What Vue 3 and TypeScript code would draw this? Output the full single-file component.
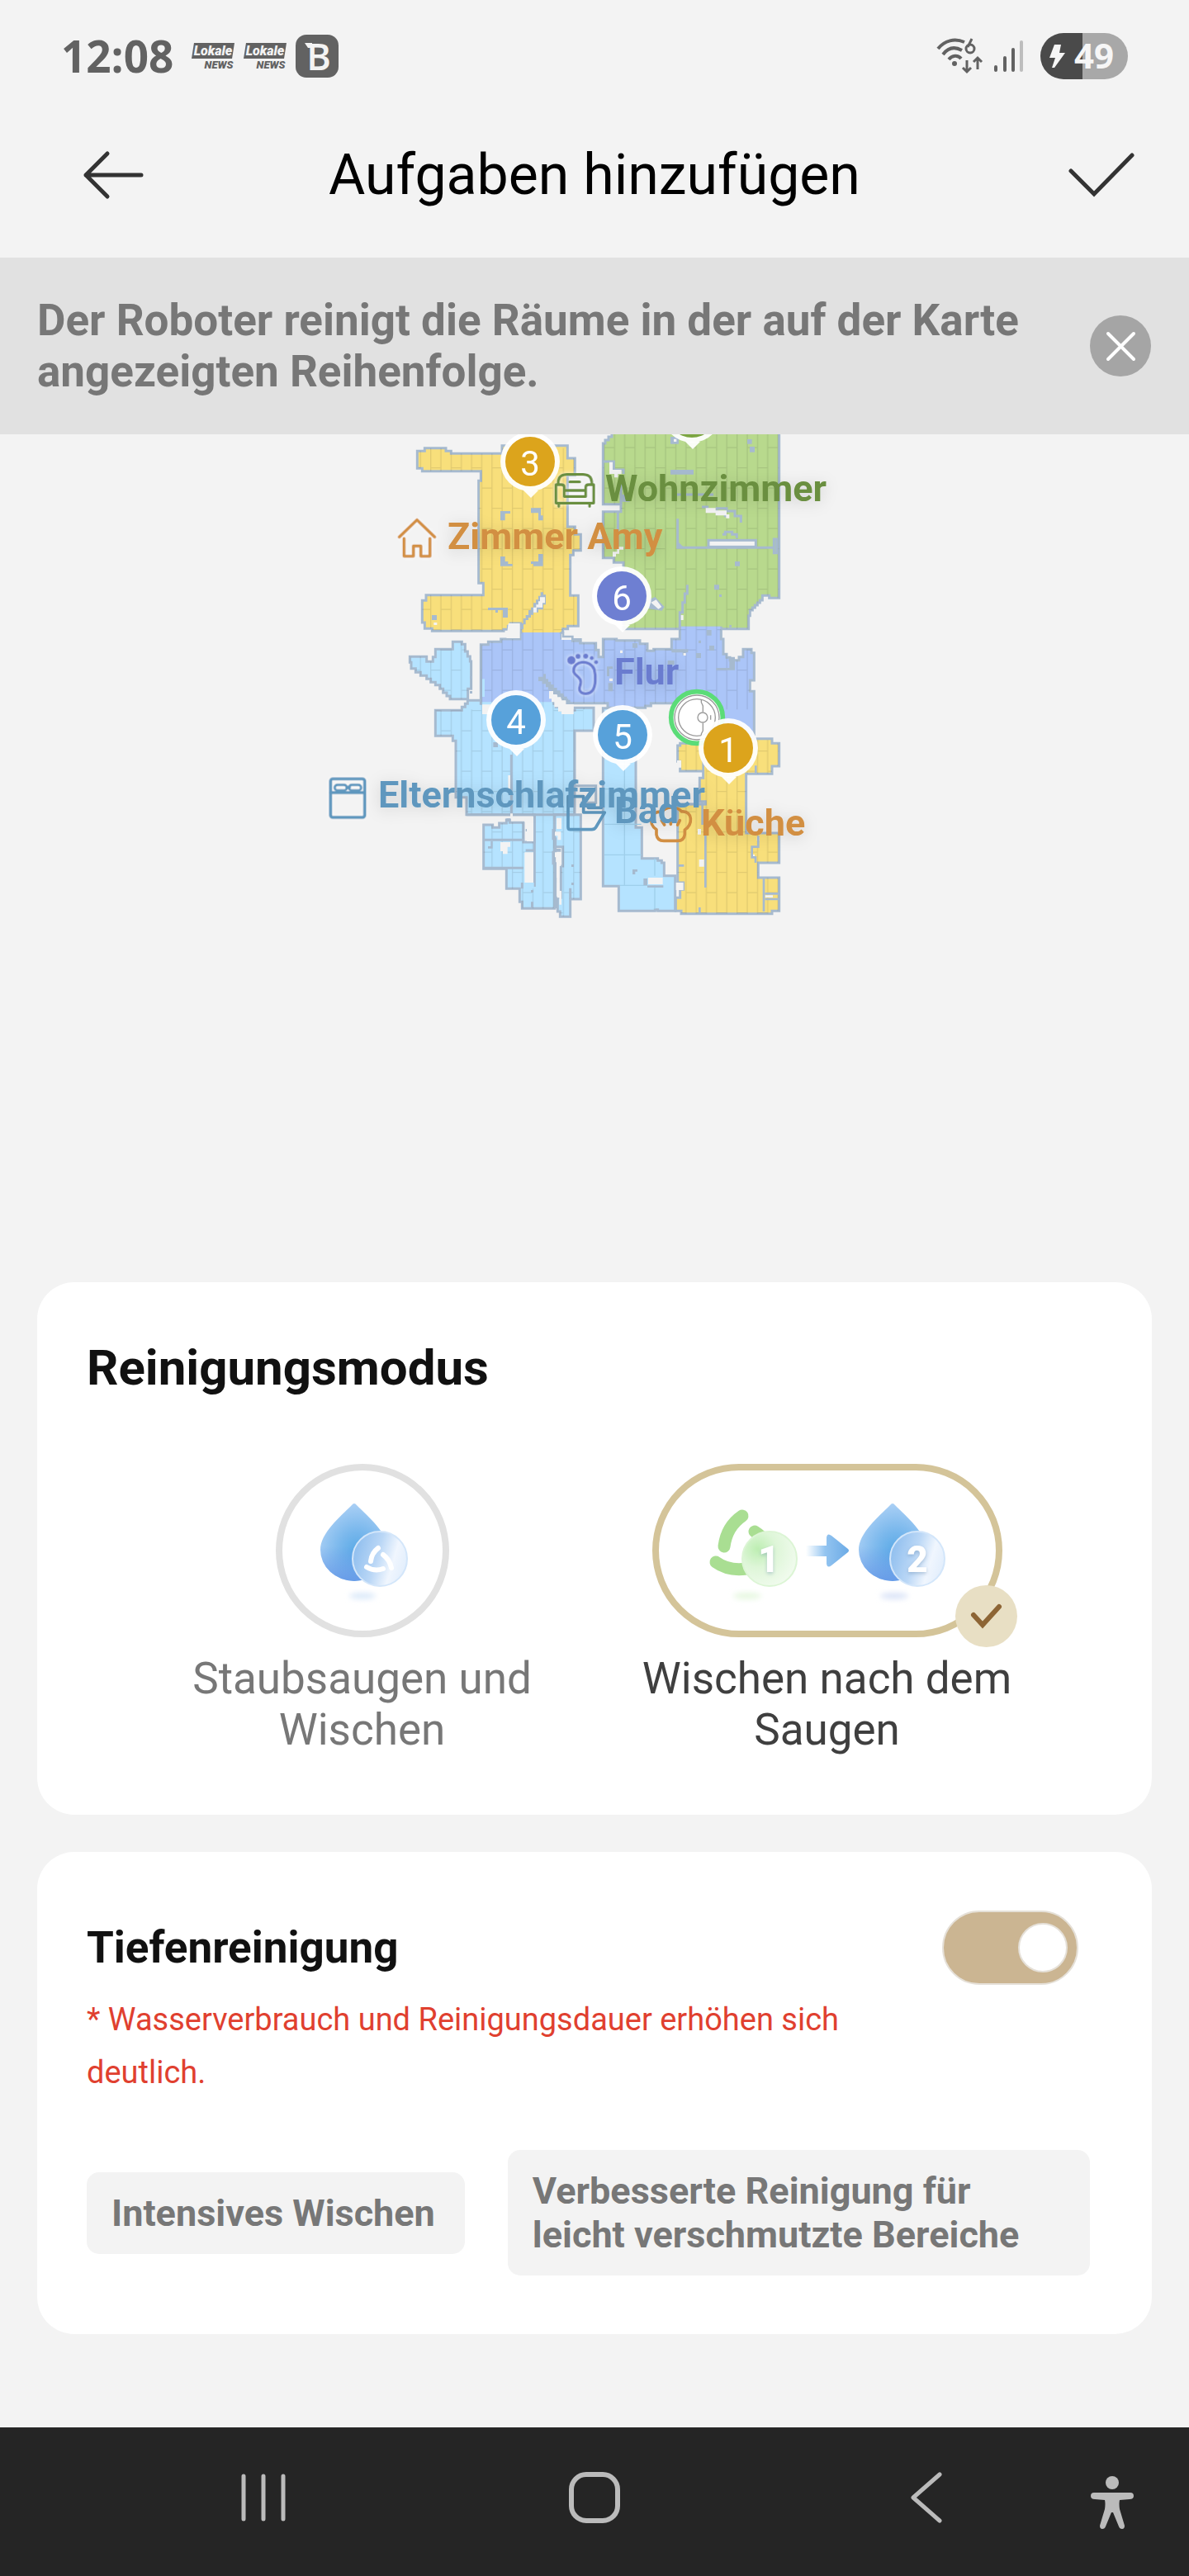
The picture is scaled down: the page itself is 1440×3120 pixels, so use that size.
<script setup lang="ts">
import { ref } from 'vue'

interface Pin {
  n: string
  x: number
  y: number
  color: string
}
interface RoomLabel {
  name: string
  x: number
  y: number
  color: string
}
interface Room {
  id: string
  fill: string
  at: string
  d: string
}

const YELLOW = '#f8df7b'
const SKY = '#b5e3ff'

const bannerOpen = ref(true)
const mode = ref<'both' | 'after'>('after')
const deepClean = ref(true)

const rooms: Room[] = [
  {
    id: 'amy',
    fill: YELLOW,
    at: 'translate(1140 -21)',
    d: 'M376 82H403V71H480V82H499V91H684V62H922V108H949V170H922V357H949V385H970V443H943V460H932V607H961V718H923V728H905V745H752V708H715V718H706V730H690V736H430V727H403V705H394V625H408V605H616V562H599V190H607V155H394V145H376Z',
  },
  {
    id: 'wohnzimmer',
    fill: '#b8d98d',
    at: 'translate(1980 -21)',
    d: 'M243 -20V30H231V42H219V54H211V275H276V302H211V470H250V487H285V728H740V680H745V660H754V651H763V642H772V633H781V624H790V607H815V616H851V-20Z',
  },
  {
    id: 'kueche',
    fill: YELLOW,
    at: 'translate(1980 699)',
    d: 'M482 432H491V424H600V407H825V424H851V507H825V535H731V750H851V858H775V912H851V1033H825V1043H495V1033H475V985H491V955H503V930H482V645H583V635H562V550H575V525H491V490H482Z',
  },
  {
    id: 'bad',
    fill: SKY,
    at: 'translate(1980 699)',
    d: 'M211 296H330V730H352V842H410V850H424V858H433V905H473V1033H410V1028H400V1033H268V943H211Z',
  },
  {
    id: 'eltern',
    fill: SKY,
    at: 'translate(1140 699)',
    d: 'M442 304H538V292H550V280H559V268H612V278H880V292H895V304H948V295H1017V378H948V683H875V1024H757V1000H748V952H700V880H617V720H650V730H674V714H700V702H712V712H762V783H802V683H555V620H516V415H505V397H442Z',
  },
  {
    id: 'eltern-ost',
    fill: SKY,
    at: 'translate(1140 699)',
    d: 'M875 683H970V990H932V1054H895V1035H886V985H898V870H905V800H875Z',
  },
  {
    id: 'erker',
    fill: SKY,
    at: 'translate(1140 699)',
    d: 'M349 109H410V127H433V110H442V82H505V55H538V64H550V90H559V108H568V126H572V226H560V263H495V252H483V240H470V226H458V212H442V202H425V190H410V178H388V166H370V152H354V130H349Z',
  },
  {
    id: 'flur',
    fill: '#abc5f8',
    at: 'translate(1140 699)',
    d: 'M607 65H634V55H680V45H750V20H900V42H940V52H968V60H1025V85H1035V110H1051V45H1100V50H1185V62H1212V88H1235V82H1300V45H1330V4H1480V45H1488V100H1500V112H1512V122H1545V110H1560V82H1590V95H1600V195H1585V235H1600V407H1400V278H1225V288H1205V295H1068V278H920V266H905V254H890V242H870V280H607Z',
  },
]

const pins: Pin[] = [
  { n: '', x: 838, y: -26, color: '#7ba541' },
  { n: '3', x: 642, y: 33, color: '#dca41c' },
  { n: '6', x: 753, y: 196, color: '#6e7fd2' },
  { n: '4', x: 625, y: 346, color: '#57a1da' },
  { n: '5', x: 754, y: 364, color: '#57a1da' },
  { n: '1', x: 882, y: 380, color: '#dca41c' },
]

const labels: RoomLabel[] = [
  { name: 'Wohnzimmer', x: 733, y: 81, color: '#6a8f3f' },
  { name: 'Zimmer Amy', x: 542, y: 139, color: '#d28f43' },
  { name: 'Flur', x: 744, y: 303, color: '#6a7ccf' },
  { name: 'Elternschlafzimmer', x: 458, y: 452, color: '#5e97be' },
  { name: 'Küche', x: 849, y: 486, color: '#d28f43' },
  { name: 'Bad', x: 744, y: 471, color: '#5e97be' },
]
</script>

<template>
  <div class="screen">
    <div class="status">
      <div class="status-side">
        <span class="clock">12:08</span>
        <svg v-for="i in 2" :key="i" class="news" width="52" height="34" viewBox="0 0 52 34">
          <path d="M3 1H52L49 20H0Z" fill="#626262" />
          <text x="26" y="16" text-anchor="middle" font-size="16" fill="#f3f3f3">Lokale</text>
          <text x="33" y="32" text-anchor="middle" font-size="13" fill="#626262">NEWS</text>
        </svg>
        <svg class="b-app" width="52" height="52" viewBox="0 0 52 52">
          <rect width="52" height="52" rx="13" fill="#626262" />
          <path d="M11 10H20V16H15Z" fill="#f3f3f3" />
          <text x="28" y="43" text-anchor="middle" font-size="45" fill="#f3f3f3">B</text>
        </svg>
      </div>
      <div class="status-side">
        <svg width="58" height="44" viewBox="0 0 58 44" fill="none" stroke="#626262" stroke-width="4">
          <path d="M2 13C10 3 22 0 34 5M8 20C14 12 22 10 31 15M15 26C19 21 26 20 30 25" />
          <circle cx="22" cy="31" r="3" fill="#626262" stroke="none" />
          <path d="M43 1L38 11" stroke-width="3" />
          <circle cx="41" cy="13" r="5" stroke-width="3" />
          <path d="M37 27V41M32 36L37 41L42 36M50 38V24M45 29L50 24L55 29" stroke-width="3" />
        </svg>
        <svg class="signal" width="36" height="40" viewBox="0 0 36 40" stroke="#626262" stroke-width="4" stroke-linecap="round">
          <path d="M2 33V37M13 22V37M23 12V37" />
          <path d="M33 3V37" stroke="#bdbdbd" />
        </svg>
        <svg class="battery" width="106" height="56" viewBox="0 0 106 56">
          <path d="M51 0H28A28 28 0 0 0 28 56H51Z" fill="#4a4a4a" />
          <path d="M51 0H78A28 28 0 0 1 78 56H51Z" fill="#a8a8a8" />
          <path d="M17 14H25L23 24H30L17 42H14L18 30H11Z" fill="#f6f6f6" />
          <text x="65" y="43" text-anchor="middle" font-size="42" fill="#f6f6f6">49</text>
        </svg>
      </div>
    </div>

    <header class="header">
      <button class="icon-btn back" type="button" aria-label="Zurück">
        <svg width="76" height="60" viewBox="0 0 76 60" fill="none" stroke="#333" stroke-width="5" stroke-linecap="round" stroke-linejoin="round">
          <path d="M31 4L5 30L31 56M5 30H72" />
        </svg>
      </button>
      <h1>Aufgaben hinzufügen</h1>
      <button class="icon-btn save" type="button" aria-label="Speichern">
        <svg width="80" height="56" viewBox="0 0 80 56" fill="none" stroke="#333" stroke-width="5" stroke-linecap="round">
          <path d="M3 23L31 51L77 4" />
        </svg>
      </button>
    </header>

    <div v-if="bannerOpen" class="banner">
      <p>Der Roboter reinigt die Räume in der auf der Karte angezeigten Reihenfolge.</p>
      <button class="icon-btn" type="button" aria-label="Hinweis schließen" @click="bannerOpen = false">
        <svg width="75" height="75" viewBox="0 0 75 75">
          <circle cx="37" cy="37" r="37" fill="#a5a5a5" />
          <path d="M22 22L53 53M53 22L22 53" stroke="#fff" stroke-width="4" stroke-linecap="round" />
        </svg>
      </button>
    </div>

    <svg class="map" viewBox="0 0 1440 1027">
      <defs>
        <pattern id="planks" patternUnits="userSpaceOnUse" x="1563" y="120" width="74.2" height="147">
          <path d="M2 0V147M39 0V147M2 2H39M39 75.5H74.2M0 75.5H2" stroke="#000" stroke-opacity=".09" stroke-width="4" />
        </pattern>
        <filter id="glow" x="-20%" y="-60%" width="140%" height="220%">
          <feDropShadow dx="0" dy="3" stdDeviation="9" flood-color="#000" flood-opacity=".14" />
        </filter>
        <filter id="halo" x="-20%" y="-20%" width="140%" height="140%">
          <feDropShadow dx="0" dy="0" stdDeviation="8" flood-color="#fff" flood-opacity=".8" />
        </filter>
      </defs>

      <!-- floor plan, three grid units per map pixel -->
      <svg x="0" y="0" width="1440" height="1027" viewBox="0 0 4320 3081">
        <g v-for="r in rooms" :key="r.id">
          <path :d="r.d" :transform="r.at" :fill="r.fill" stroke="#a6bacf" stroke-width="9" />
        </g>

        <!-- open passages between rooms have no wall -->
        <g transform="translate(1140 -21)">
          <path d="M757 736H900" stroke="#f8df7b" stroke-width="10" />
          <path d="M757 746H893" stroke="#abc5f8" stroke-width="10" />
          <path d="M611 1000H868" stroke="#b5e3ff" stroke-width="12" />
        </g>
        <g transform="translate(1980 -21)">
          <path d="M494 726H637" stroke="#abc5f8" stroke-width="14" />
        </g>
        <g fill="url(#planks)">
          <path d="M1520 50H2110V720H1520ZM2180 0H2840V710H2180ZM1490 750H1720V965H1490ZM1745 710H2740V1000H1745ZM1575 1000H2120V1800H1575ZM2460 1110H2840V1745H2460Z" clip-path="url(#floor)" />
        </g>
        <defs>
          <clipPath id="floor">
            <path v-for="r in rooms.filter((x) => x.id !== 'bad')" :key="r.id" :d="r.d" :transform="r.at" />
          </clipPath>
        </defs>

        <!-- wide boards of the bathroom -->
        <g transform="translate(1980 699)" fill="none" stroke="#9fcfeb" stroke-width="4">
          <path d="M289 300V940M216 590H328M216 718H350M216 829H350M272 940H372M399 940V1026M399 842V905" />
        </g>

        <!-- details: Zimmer Amy -->
        <g transform="translate(1140 -21)" fill="#a6bacf">
          <path d="M678 300H714V309H695V334H678ZM789 289H825V316H833V334H816V307H789ZM678 465H695V483H706V492H722V500H678ZM833 456V500H798V492H789V483H816V456ZM429 678H447V696H429ZM633 651H705V687H687V660H669V669H660V660H633Z" />
          <path d="M824 595H834V604H843V640H834V658H816V668H798V677H789V687H780V696H770V712H762V730H752V708H761V690H770V678H780V660H789V650H798V634H807V622H816V608H824Z" />
          <path d="M822 613H840V634H831V650H810V668H798V650H808V640H816V628H822ZM707 708H749V762H700ZM436 705H448V714H436Z" fill="#f3f3f3" />
        </g>

        <!-- details: Wohnzimmer -->
        <g transform="translate(1980 -21)">
          <g fill="none" stroke="#a6bacf" stroke-width="9">
            <path d="M211 120H250V150H285V165M276 170V275M265 302V440M482 328V433H832V402H842V452H832V433M480 240H612M645 385H655V376H680V385H697V398M517 568V600H508V632H500V668H490V728M570 285H590V300H625V310H655V322M620 290H660V300H690V318H712V342" />
            <rect x="594" y="406" width="172" height="24" fill="#f3f3f3" />
          </g>
          <path d="M456 150H540V167H456ZM735 39H752V56H735ZM744 66H762V86H744ZM690 483H708V500H690ZM615 568H633V586H615ZM633 603H642V612H633ZM456 30H486V56H456ZM482 410L505 432H482ZM378 622L400 612L434 648L425 662L378 655ZM280 240H308V266H280ZM670 714H678V722H670Z" fill="#a6bacf" />
          <path d="M234 122H246V150H278V165H265V178H252V165H234ZM584 289H620V298H660V312H670V326H658V316H620V307H584ZM468 38H478V48H468ZM385 632L404 622L424 648L412 656ZM494 678H503V696H494ZM246 466V448H262V430H285V440H270V455H258V466Z" fill="#f3f3f3" />
        </g>

        <!-- details: Flur -->
        <g transform="translate(1980 699)">
          <path d="M587 12H605V32H587ZM597 69H615V87H597ZM549 96H567V114H549ZM558 50H567V60H558ZM670 110H690V158H622V150H670ZM318 60H336V77H318ZM446 123H470V139H446ZM225 145H246V153H234V180H225ZM230 205H246V235H230Z" fill="#a6bacf" />
          <path d="M460 82H520V94H512V104H500V94H460Z" fill="#a6bacf" />
          <path d="M503 96H512V105H503ZM273 86H282V96H273ZM234 188H246V198H234ZM60 22H180V48H60Z" fill="#f3f3f3" />
          <path d="M56 22H66V36H100V46H130V56" fill="none" stroke="#a6bacf" stroke-width="8" />
        </g>
        <g transform="translate(1140 699)">
          <path d="M816 182H834V172H843V190H852V200H862V210H872V222H884V232H896V242H908V254H920V266H932V280H920V270H908V262H895V250H880V240H865V230H852V220H843V208H830V198H816Z" fill="#a6bacf" />
          <path d="M855 234H870V246H884V256H898V268H916V282H944V318H900V308H888V292H874V274H864V262H855ZM612 283H650V318H612Z" fill="#f3f3f3" />
          <path d="M612 190H621V255H612Z" fill="#b5e3ff" />
        </g>

        <!-- details: Elternschlafzimmer -->
        <g transform="translate(1140 699)">
          <path d="M718 465V683M555 683H948M617 775H762M802 683V945M875 683V735M870 735V770H878V820H870V860H878V1024M617 877H762M757 952V930M770 813H802M932 950V990" fill="none" stroke="#a6bacf" stroke-width="9" />
          <path d="M652 420H669V438H652ZM700 697H714V708H700ZM770 735H780V744H770ZM643 780H650V806H633V798H643ZM567 180H576V189H567ZM567 234H576V243H567ZM789 957H798V966H789ZM936 864H945V873H936ZM936 930H945V939H936ZM789 1000H798V1020H789ZM870 807H898V818H870Z" fill="#a6bacf" />
          <path d="M678 783H714V800H704V826H687V816H678ZM766 820H798V930H766ZM766 690H798V780H774V710H766ZM714 540V610H706V540ZM882 695H900V735H882ZM876 745H898V775H886V760H876ZM876 820H898V870H892V912H882V838H876ZM884 930H892V960H900V1010H892V985H884ZM714 679H723V690H714Z" fill="#f3f3f3" />
          <path d="M766 930H800V952H766Z" fill="#b5e3ff" />
        </g>

        <!-- details: Bad and Küche -->
        <g transform="translate(1980 699)">
          <path d="M358 915H372V940H430V948H372V940H358ZM318 882H336V890H328V900H318Z" fill="#a6bacf" />
          <path d="M110 578H185V640H130" fill="none" stroke="#a6bacf" stroke-width="9" />
          <path d="M375 912H428V936H375ZM476 930H503V957H476ZM480 486H495V512H486V498H480ZM560 846H578V872H560ZM555 735H567V755H555ZM770 764H780V778H770ZM750 828H762V838H750ZM800 976H828V984H800Z" fill="#f3f3f3" />
          <path d="M583 665V948M572 640V720M482 645H583M575 486V525M766 505V535M795 912V1035M800 970H851M800 990H851M775 760V800H752V838H765V858M562 1020V1040M485 868H505" fill="none" stroke="#a6bacf" stroke-width="8" />
        </g>

        <!-- robot -->
        <g transform="translate(2532 1029)" fill="none">
          <circle r="94" fill="#fff" stroke="#5bdc78" stroke-width="17" />
          <g stroke="#9a9a9a" stroke-width="4">
            <circle r="81" />
            <circle r="67" />
            <path d="M16 -65V-55L22 -42V-20M22 20V48L16 60V65" />
            <circle cx="21" r="18" />
            <path d="M50 -8V8" />
          </g>
        </g>

        <!-- room icons -->
        <g fill="none" stroke-width="11" stroke-linecap="round" stroke-linejoin="round" filter="url(#halo)">
          <g transform="translate(1140 -21)" stroke="#d28f43">
            <path d="M311 394L375 332L439 394M328 400V464H362V427H389V464H422V400" />
          </g>
          <g transform="translate(1980 -21)" stroke="#6a8f3f" stroke-width="10">
            <path d="M48 203V194Q50 167 80 167H138Q168 167 170 194V203M40 204H60Q70 204 70 214V247H148V214Q148 204 158 204H177V271H40ZM90 194H126M72 225H146M50 274V283M162 274V283" />
          </g>
          <g transform="translate(1140 699)" stroke="#5e97be">
            <rect x="61" y="553" width="124" height="140" rx="8" />
            <path d="M62 603H184M120 584H130" />
            <rect x="76" y="575" width="44" height="20" rx="10" stroke-width="9" />
            <rect x="128" y="575" width="44" height="20" rx="10" stroke-width="9" />
          </g>
        </g>
        <g transform="translate(1980 699)" fill="none" stroke-width="11" stroke-linecap="round" stroke-linejoin="round">
          <g stroke="#6a7ccf" filter="url(#halo)">
            <path d="M104 160C104 122 164 118 179 155C186 182 184 214 174 230C162 248 132 246 126 231C121 219 136 207 128 192C120 178 104 174 104 160Z" stroke-width="10" />
            <g fill="#6a7ccf" stroke="none">
              <circle cx="96" cy="122" r="15" />
              <circle cx="120" cy="108" r="9" />
              <circle cx="148" cy="107" r="9" />
              <circle cx="170" cy="114" r="7" />
              <circle cx="186" cy="129" r="7" />
            </g>
          </g>
          <path d="M84 617H140V675H217L185 729Q180 737 170 737H92Q84 737 84 728ZM157 658H205" stroke="#5e97be" />
          <path d="M405 737C372 715 384 668 425 673C440 652 480 652 497 672C538 668 538 722 508 738V755Q505 778 482 778H432Q408 778 405 755ZM424 704L434 720M457 700V718M490 704L482 720" stroke="#d28f43" />
        </g>
      </svg>

      <g class="room-names" filter="url(#glow)">
        <text v-for="l in labels" :key="l.name" :x="l.x" :y="l.y" :fill="l.color">{{ l.name }}</text>
      </g>

      <g v-for="p in pins" :key="p.x" class="pin">
        <circle :cx="p.x" :cy="p.y" r="36" fill="#fff" fill-opacity=".93" />
        <path :d="`M${p.x - 8} ${p.y + 35}L${p.x + 1} ${p.y + 44}L${p.x + 10} ${p.y + 35}Z`" fill="#fff" fill-opacity=".93" />
        <circle :cx="p.x" :cy="p.y" r="30" :fill="p.color" />
        <text v-if="p.n" :x="p.x" :y="p.y + 17" text-anchor="middle" fill="#fff">{{ p.n }}</text>
      </g>
    </svg>

    <main class="cards">
      <section class="card modes-card">
        <h2>Reinigungsmodus</h2>
        <div class="modes">
          <label class="mode" :class="{ active: mode === 'both' }">
            <input v-model="mode" class="hidden-input" type="radio" name="mode" value="both" />
            <span class="ring">
              <svg width="194" height="194" viewBox="8 8 194 194">
                <defs>
                  <radialGradient id="drop" cx=".55" cy=".62" r=".75">
                    <stop offset="0" stop-color="#58a9e6" />
                    <stop offset=".35" stop-color="#78b7ec" />
                    <stop offset="1" stop-color="#bcd8f8" />
                  </radialGradient>
                  <linearGradient id="dropShade" x1="0" y1="0" x2="0" y2="1">
                    <stop offset=".55" stop-color="#5f93e6" stop-opacity="0" />
                    <stop offset="1" stop-color="#5f93e6" stop-opacity=".8" />
                  </linearGradient>
                  <linearGradient id="bubble" x1="0" y1=".3" x2="1" y2=".6">
                    <stop offset="0" stop-color="#8dbdee" />
                    <stop offset=".45" stop-color="#bad7f6" />
                    <stop offset=".75" stop-color="#f0f6fe" />
                    <stop offset="1" stop-color="#e2eefc" />
                  </linearGradient>
                  <filter id="soft" x="-50%" y="-150%" width="200%" height="400%">
                    <feGaussianBlur stdDeviation="3" />
                  </filter>
                </defs>
                <ellipse cx="105" cy="160" rx="16" ry="4" fill="#dceafa" filter="url(#soft)" />
                <path d="M92 50Q95 46 98 50C112 64 136 84 136 104A41 38 0 0 1 54 104C54 84 78 64 92 50Z" fill="url(#drop)" />
                <path d="M92 50Q95 46 98 50C112 64 136 84 136 104A41 38 0 0 1 54 104C54 84 78 64 92 50Z" fill="url(#dropShade)" />
                <circle cx="126" cy="115" r="33" fill="url(#bubble)" stroke="#d3e6fa" stroke-width="2" />
                <path d="M124 102Q116 108 115 118M130 110Q138 116 140 126M110 125Q120 131 130 127" fill="none" stroke="#fff" stroke-width="6" stroke-linecap="round" />
              </svg>
            </span>
            <span class="mode-name">Staubsaugen und Wischen</span>
          </label>

          <label class="mode" :class="{ active: mode === 'after' }">
            <input v-model="mode" class="hidden-input" type="radio" name="mode" value="after" />
            <span class="ring">
              <svg width="408" height="194" viewBox="8 8 408 194">
                <defs>
                  <linearGradient id="arrow" x1="186" y1="0" x2="238" y2="0" gradientUnits="userSpaceOnUse">
                    <stop offset="0" stop-color="#9ccaf2" stop-opacity="0" />
                    <stop offset=".45" stop-color="#93c4f0" />
                    <stop offset="1" stop-color="#6cabe6" />
                  </linearGradient>
                  <radialGradient id="mint" cx=".28" cy=".32" r=".75">
                    <stop offset="0" stop-color="#bdeeb2" />
                    <stop offset=".45" stop-color="#def6d8" />
                    <stop offset="1" stop-color="#f0fbed" />
                  </radialGradient>
                </defs>
                <ellipse cx="115" cy="160" rx="17" ry="4" fill="#e6f8e0" filter="url(#soft)" />
                <ellipse cx="293" cy="160" rx="17" ry="4" fill="#dbe4f8" filter="url(#soft)" />
                <path d="M109 63Q90 76 87 100M124 82Q140 92 146 112M77 119Q92 130 114 127" fill="none" stroke="#a9de92" stroke-width="15" stroke-linecap="round" />
                <circle cx="142" cy="115" r="33" fill="url(#mint)" stroke="#dcf5d5" stroke-width="2" />
                <path d="M186 99H211V89Q212 83 217 87L237 103Q239 105 237 107L217 123Q212 127 211 121V112H186Z" fill="url(#arrow)" />
                <g transform="translate(196 0)">
                  <path d="M92 50Q95 46 98 50C112 64 136 84 136 104A41 38 0 0 1 54 104C54 84 78 64 92 50Z" fill="url(#drop)" />
                  <path d="M92 50Q95 46 98 50C112 64 136 84 136 104A41 38 0 0 1 54 104C54 84 78 64 92 50Z" fill="url(#dropShade)" />
                  <circle cx="125" cy="115" r="33" fill="url(#bubble)" stroke="#d3e6fa" stroke-width="2" />
                </g>
                <g class="step-no" fill="#fff" text-anchor="middle">
                  <text x="141" y="131">1</text>
                  <text x="321" y="131">2</text>
                </g>
              </svg>
              <span v-if="mode === 'after'" class="badge">
                <svg width="75" height="75" viewBox="0 0 75 75" fill="none">
                  <path d="M22 36L33 48L53 26" stroke="#8d6535" stroke-width="6" stroke-linecap="round" />
                </svg>
              </span>
            </span>
            <span class="mode-name">Wischen nach dem Saugen</span>
          </label>
        </div>
      </section>

      <section class="card deep-card">
        <div class="deep-row">
          <label class="deep-title" for="deep">Tiefenreinigung</label>
          <input id="deep" v-model="deepClean" class="toggle" type="checkbox" role="switch" />
        </div>
        <p class="warning">* Wasserverbrauch und Reinigungsdauer erhöhen sich deutlich.</p>
        <div class="chips">
          <span class="chip">Intensives Wischen</span>
          <span class="chip grow">Verbesserte Reinigung für leicht verschmutzte Bereiche</span>
        </div>
      </section>
    </main>

    <nav class="navbar">
      <button class="icon-btn" type="button" aria-label="Letzte Apps">
        <svg width="60" height="64" viewBox="0 0 60 64" stroke="#bbb" stroke-width="5" stroke-linecap="round">
          <path d="M6 6V58M30 6V58M54 6V58" />
        </svg>
      </button>
      <button class="icon-btn" type="button" aria-label="Startseite">
        <svg width="64" height="64" viewBox="0 0 64 64" fill="none" stroke="#bbb" stroke-width="6">
          <rect x="4" y="4" width="56" height="56" rx="18" />
        </svg>
      </button>
      <button class="icon-btn" type="button" aria-label="Zurück">
        <svg width="44" height="64" viewBox="0 0 44 64" fill="none" stroke="#bbb" stroke-width="5" stroke-linecap="round" stroke-linejoin="round">
          <path d="M39 4L7 32L39 60" />
        </svg>
      </button>
      <button class="icon-btn access" type="button" aria-label="Bedienungshilfen">
        <svg width="52" height="64" viewBox="0 0 52 64" fill="#bbb">
          <circle cx="26" cy="8" r="8" />
          <path d="M4 20H48Q52 20 52 24Q52 28 47 28L35 29Q34 33 35 40L41 60Q41 64 38 64Q35 64 34 61L27 44H25L18 61Q17 64 14 64Q11 64 11 60L17 40Q18 33 17 29L5 28Q0 28 0 24Q0 20 4 20Z" />
        </svg>
      </button>
    </nav>
  </div>
</template>

<style>
body {
  background: #f3f3f3;
}
</style>

<style scoped>
.screen {
  display: flex;
  flex-direction: column;
  min-height: 100vh;
  background: #f3f3f3;
  font-family: Roboto, 'Noto Sans', sans-serif;
  color: #111;
}
h1,
h2,
p {
  margin: 0;
}
svg {
  display: block;
  flex: none;
}
.icon-btn {
  display: flex;
  padding: 0;
  border: 0;
  background: none;
  cursor: pointer;
}

.status {
  display: flex;
  align-items: center;
  justify-content: space-between;
  height: 136px;
  padding: 0 74px;
}
.status-side {
  display: flex;
  align-items: center;
}
.status-side svg {
  overflow: visible;
}
.clock {
  margin-right: 22px;
  font: 700 53px/60px 'Open Sans', 'Noto Sans', sans-serif;
  color: #626262;
}
.news {
  margin-right: 11px;
  font-weight: 900;
  font-style: italic;
}
.b-app {
  font-family: 'Open Sans', sans-serif;
  font-weight: 600;
}
.signal {
  margin: 0 20px 0 12px;
}
.battery {
  font-family: 'Open Sans', sans-serif;
  font-weight: 700;
}

.header {
  display: grid;
  grid-template-columns: 1fr auto 1fr;
  align-items: center;
  height: 152px;
  padding: 0 66px 24px;
}
.header h1 {
  font-size: 68px;
  line-height: 82px;
  font-weight: 400;
  color: #000;
}
.back {
  margin-left: 33px;
}
.save {
  justify-self: end;
}

.banner {
  display: flex;
  align-items: center;
  justify-content: space-between;
  padding: 45px;
  background: #e1e1e1;
}
.banner p {
  max-width: 1240px;
  font-size: 53px;
  line-height: 62px;
  font-weight: 700;
  color: #777;
}

.map {
  width: 100%;
  overflow: hidden;
}
.room-names {
  font-size: 45px;
  font-weight: 700;
}
.pin {
  font-size: 42px;
}

.cards {
  display: flex;
  flex-direction: column;
  gap: 45px;
  padding: 0 45px;
}
.card {
  border-radius: 45px;
  background: #fff;
}
.modes-card {
  padding: 69px 60px 72px;
}
.modes-card h2 {
  font-size: 60px;
  line-height: 70px;
  font-weight: 700;
}
.modes {
  display: flex;
  justify-content: center;
  gap: 113px;
  margin-top: 81px;
}
.mode {
  display: flex;
  flex-direction: column;
  align-items: center;
  width: 450px;
  cursor: pointer;
}
.hidden-input {
  position: absolute;
  opacity: 0;
}
.ring {
  position: relative;
  border: 8px solid #e1e1e1;
  border-radius: 105px;
}
.active .ring {
  border-color: #d4c499;
}
.badge {
  position: absolute;
  right: -26px;
  bottom: -20px;
  border-radius: 50%;
  background: #e8dfc4;
}
.step-no {
  font-size: 44px;
  font-weight: 900;
  filter: drop-shadow(0 2px 2px rgba(80, 120, 160, 0.35));
}
.mode-name {
  margin-top: 19px;
  font-size: 53px;
  line-height: 62px;
  text-align: center;
  color: #777;
}
.active .mode-name {
  color: #3f3f3f;
}

.deep-card {
  padding: 71px 75px 71px 60px;
}
.deep-row {
  display: flex;
  align-items: center;
  justify-content: space-between;
  padding-right: 14px;
}
.deep-title {
  font-size: 53px;
  line-height: 62px;
  font-weight: 700;
}
.toggle {
  appearance: none;
  display: flex;
  align-items: center;
  box-sizing: border-box;
  width: 165px;
  height: 90px;
  margin: 0;
  padding: 0 11px;
  border: 2px solid #e5e0d8;
  border-radius: 45px;
  background: #d8d8d8;
}
.toggle::before {
  content: '';
  box-sizing: border-box;
  width: 60px;
  height: 60px;
  border: 2px solid #e5e0d8;
  border-radius: 50%;
  background: #fff;
}
.toggle:checked {
  justify-content: flex-end;
  background: #cbb592;
}
.warning {
  max-width: 1020px;
  margin-top: 10px;
  font-size: 38px;
  line-height: 64px;
  color: #e0402f;
}
.chips {
  display: flex;
  align-items: center;
  gap: 52px;
  margin-top: 62px;
}
.chip {
  padding: 23px 36px 23px 30px;
  border-radius: 15px;
  background: #f3f3f3;
  font-size: 45px;
  line-height: 53px;
  font-weight: 700;
  color: #777;
}
.grow {
  flex: 1;
}

.navbar {
  position: relative;
  display: flex;
  align-items: center;
  height: 170px;
  margin-top: auto;
  padding: 0 118px 10px;
  background: #252525;
}
.navbar .icon-btn {
  flex: 1;
  justify-content: center;
}
.access {
  position: absolute;
  right: 67px;
  bottom: 57px;
}
</style>
